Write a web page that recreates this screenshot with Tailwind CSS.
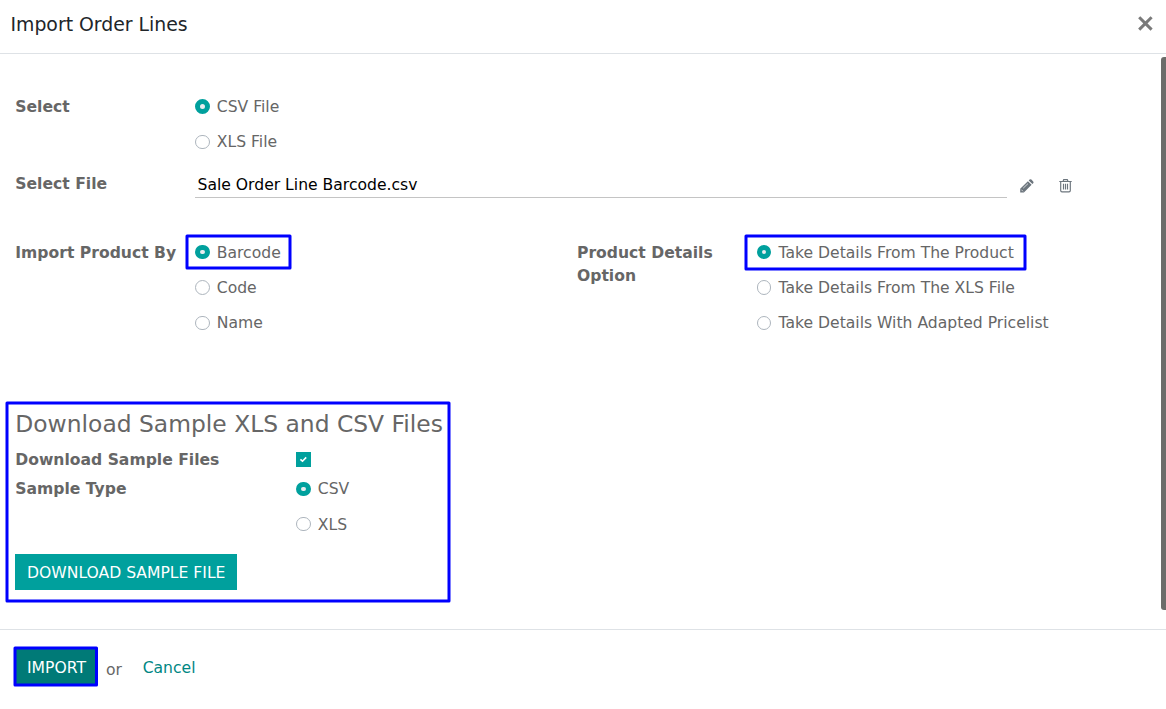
<!DOCTYPE html>
<html lang="en">
<head>
<meta charset="utf-8">
<title>Import Order Lines</title>
<script src="https://cdn.jsdelivr.net/npm/@tailwindcss/browser@4"></script>
</head>
<body class="flex h-[709px] w-[1166px] flex-col overflow-hidden bg-white font-['DejaVu_Sans',sans-serif] text-[15.6px] leading-[23px] text-[#666666]">
<header class="flex h-[54px] shrink-0 items-start justify-between border-b border-[#dee2e6] pt-[10px] pr-[13px] pl-[10.5px]">
  <h1 class="text-[18.85px] leading-[29px] text-[#212529]">Import Order Lines</h1>
  <button aria-label="Close" class="mt-[6px]"><svg class="block" width="15" height="15" viewBox="0 0 15 15" fill="none" stroke="#7a7a7a" stroke-width="3"><path d="M1.2 1.2 13.6 13.6M13.6 1.2 1.2 13.6"/></svg></button>
</header>

<main class="flex h-[575px] shrink-0 justify-between">
  <div class="flex flex-1 flex-col pt-[41px] pl-[15px]">
    <section class="flex h-[77px]">
      <div class="w-[180px] pt-px pl-[0.3px] font-bold">Select</div>
      <div class="flex flex-col gap-[11px]">
        <label class="flex items-start gap-[6.8px] pt-px"><span class="mt-[3px] size-[15px] rounded-full border-5 border-[#00a09d] bg-[#e9ecef]"></span>CSV File</label>
        <label class="flex items-start gap-[6.8px] pt-px"><span class="mt-[4px] h-[14px] w-[15px] rounded-full border border-[#adb5bd]"></span>XLS File</label>
      </div>
    </section>

    <section class="flex h-[69px]">
      <div class="w-[180px] pt-px pl-[0.3px] font-bold">Select File</div>
      <div class="h-[26px] w-[812px] border-b border-[#c4c4c4] pt-[2px] pl-[2.5px] text-black">Sale Order Line Barcode.csv</div>
      <svg class="mt-[7px] ml-[13px]" width="14" height="14" viewBox="0 0 14 14" fill="#6c757d"><path d="M.2 13.4V9.7L7.9 2.3 11.6 5.8 3.9 13.4ZM8.7 1.5 9.6.6Q10.5 0 11.4.6L13.2 2.4Q14 3.3 13.2 4.2L12.4 5Z"/><path d="M1.4 10.7 3 12.3M3.2 9.2 8 4.6" fill="none" stroke="#fff" stroke-width=".7"/></svg>
      <svg class="mt-[7px] ml-[25px]" width="13" height="14" viewBox="0 0 13 14" fill="none" stroke="#6c757d" stroke-width="1.15"><path d="M.3 2.5H12.7M4 2.5 4.7.6H8.3L9 2.5M1.7 3V11.5Q1.7 12.8 3 12.8H10Q11.3 12.8 11.3 11.5V3M4.5 4.8V10.6M6.5 4.8V10.6M8.5 4.8V10.6"/></svg>
    </section>

    <section class="flex h-[167px]">
      <div class="w-[180px] pt-px pl-[0.3px] font-bold whitespace-nowrap">Import Product By</div>
      <div class="flex w-[382px] flex-col items-start gap-[11px]">
        <label class="relative flex items-start gap-[6.8px] pt-px"><span class="mt-[3px] h-[14px] w-[15px] rounded-full border-5 border-[#00a09d] bg-[#e9ecef]"></span>Barcode
          <svg class="absolute -top-[8px] -left-[11px]" width="110" height="38" fill="none" stroke="#00f" stroke-width="3" stroke-linejoin="round"><rect x="3" y="3" width="103" height="32"/></svg></label>
        <label class="flex items-start gap-[6.8px] pt-px"><span class="mt-[3px] size-[15px] rounded-full border border-[#adb5bd]"></span>Code</label>
        <label class="flex items-start gap-[6.8px] pt-px"><span class="mt-[4px] h-[14px] w-[15px] rounded-full border border-[#adb5bd]"></span>Name</label>
      </div>
      <div class="w-[180px] pt-px font-bold">Product Details<br>Option</div>
      <div class="flex flex-col items-start gap-[11px]">
        <label class="relative flex items-start gap-[7.5px] pt-px"><span class="mt-[3px] size-[14px] rounded-full border-5 border-[#00a09d] bg-[#e9ecef]"></span>Take Details From The Product
          <svg class="absolute -top-[8px] -left-[14px]" width="286" height="39" fill="none" stroke="#00f" stroke-width="3" stroke-linejoin="round"><rect x="3" y="3" width="279" height="33"/></svg></label>
        <label class="flex items-start gap-[7.5px] pt-px"><span class="mt-[3px] h-[15px] w-[14px] rounded-full border border-[#adb5bd]"></span>Take Details From The XLS File</label>
        <label class="flex items-start gap-[7.5px] pt-px"><span class="mt-[4px] size-[14px] rounded-full border border-[#adb5bd]"></span>Take Details With Adapted Pricelist</label>
      </div>
    </section>

    <section class="relative flex w-[435px] flex-col items-start">
      <svg class="absolute -top-[8px] -left-[11px]" width="450" height="206" fill="none" stroke="#00f" stroke-width="3" stroke-linejoin="round"><rect x="3" y="3" width="442" height="198"/></svg>
      <h2 class="h-[40px] pl-[0.3px] text-[23.4px] leading-[32px] whitespace-nowrap">Download Sample XLS and CSV Files</h2>
      <div class="flex h-[29px]">
        <div class="w-[281px] pt-px pl-[0.3px] font-bold">Download Sample Files</div>
        <span class="mt-[4px] flex size-[15px] items-center justify-center bg-[#00a09d]"><svg width="9" height="9" viewBox="0 0 9 9" fill="none" stroke="#fff" stroke-width="1.6"><path d="M1.4 4.3 3.5 6.2 7.2 2.4"/></svg></span>
      </div>
      <div class="flex h-[77px]">
        <div class="w-[281px] pt-px pl-[0.3px] font-bold">Sample Type</div>
        <div class="flex flex-col gap-[12px]">
          <label class="flex items-start gap-[6.8px] pt-px"><span class="mt-[4px] h-[14px] w-[15px] rounded-full border-5 border-[#00a09d] bg-[#e9ecef]"></span>CSV</label>
          <label class="flex items-start gap-[6.8px] pt-px"><span class="mt-[3px] h-[14px] w-[15px] rounded-full border border-[#adb5bd]"></span>XLS</label>
        </div>
      </div>
      <button class="h-[36px] w-[222px] bg-[#00a09d] pt-[2px] pl-[0.5px] text-[15.6px] whitespace-nowrap text-white">DOWNLOAD SAMPLE FILE</button>
    </section>
  </div>
  <div class="mt-[3px] h-[553px] w-[5px] rounded-l-[3px] bg-[#6c6c6a]"></div>
</main>

<footer class="flex flex-1 items-start border-t border-[#dee2e6] pt-[18px] pl-[15px]">
  <button class="relative h-[37px] w-[82px] bg-[#007a77] pt-[3px] pl-px text-white">IMPORT
    <svg class="absolute -top-[3px] -left-[3px]" width="88" height="43" fill="none" stroke="#00f" stroke-width="3" stroke-linejoin="round"><rect x="3" y="3" width="81.5" height="37"/></svg></button>
  <span class="mt-[11px] ml-[9px]">or</span>
  <a class="mt-[9px] ml-[20.7px] text-[#008784]">Cancel</a>
</footer>
</body>
</html>
